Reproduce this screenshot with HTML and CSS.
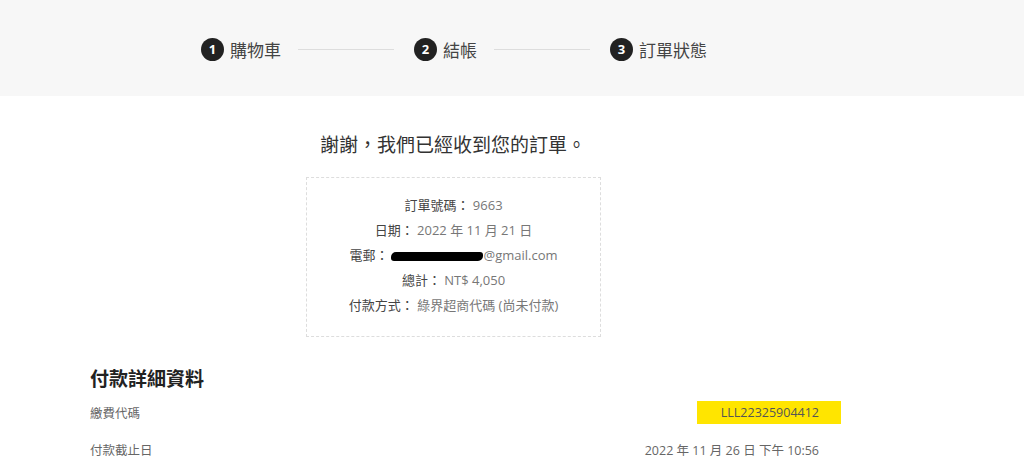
FILE: index.html
```html
<!DOCTYPE html>
<html lang="zh-Hant">

<head>
  <meta charset="UTF-8">
  <meta name="viewport" content="width=device-width, initial-scale=1.0">
  <title>訂單狀態</title>
  <link rel="stylesheet" href="styles.css">
</head>

<body>

  <header class="steps-bar">
    <div class="steps">
      <div class="step"><span class="step-num">1</span><span class="step-name">購物車</span></div>
      <div class="step-line"></div>
      <div class="step"><span class="step-num">2</span><span class="step-name">結帳</span></div>
      <div class="step-line"></div>
      <div class="step"><span class="step-num">3</span><span class="step-name">訂單狀態</span></div>
    </div>
  </header>

  <div class="container">
    <p class="thanks">謝謝，我們已經收到您的訂單。</p>

    <ul class="order-overview">
      <li>訂單號碼： <span class="val">9663</span></li>
      <li>日期： <span class="val">2022 年 11 月 21 日</span></li>
      <li>電郵：<span class="redacted"></span><span class="val">@gmail.com</span></li>
      <li>總計： <span class="val">NT$ 4,050</span></li>
      <li>付款方式： <span class="val">綠界超商代碼 (尚未付款)</span></li>
    </ul>

    <h2 class="details-title">付款詳細資料</h2>
    <div class="detail-row">
      <span class="detail-label">繳費代碼</span>
      <span class="detail-value code">LLL22325904412</span>
    </div>
    <div class="detail-row">
      <span class="detail-label">付款截止日</span>
      <span class="detail-value date">2022 年 11 月 26 日 下午 10:56</span>
    </div>
  </div>

</body>

</html>
```

FILE: styles.css
```css
body {
  font-family: "Open Sans", "Noto Sans CJK TC", sans-serif;
  background-color: #fff;
  color: #333;
  margin: 0;
  padding: 0;
}

.steps-bar {
  background-color: #f7f7f7;
  height: 94px;
  padding-top: 2px;
  display: flex;
  align-items: center;
}

.steps {
  display: flex;
  align-items: center;
  margin-left: 201px;
}

.step {
  display: flex;
  align-items: center;
}

.step-num {
  width: 23px;
  height: 23px;
  border-radius: 50%;
  background-color: #222;
  color: #fff;
  font-size: 13px;
  font-weight: 700;
  display: flex;
  align-items: center;
  justify-content: center;
}

.step-name {
  margin-left: 6px;
  font-size: 17px;
  color: #444;
}

.step-line {
  width: 96px;
  height: 1px;
  background-color: #ddd;
  margin: 0 20px 0 17px;
}

.container {
  width: 751px;
  margin-left: 90px;
  padding-top: 34px;
}

.thanks {
  width: 726px;
  margin: 0;
  text-align: center;
  font-size: 19px;
  color: #333;
  line-height: 30px;
}

.order-overview {
  list-style: none;
  width: 293px;
  margin: 17px 0 0 216px;
  padding: 15px 0 18px;
  border: 1px dashed #ddd;
  text-align: center;
  font-size: 13px;
  color: #444;
}

.order-overview li {
  line-height: 25px;
}

.val {
  color: #777;
}

.redacted {
  display: inline-block;
  width: 92px;
  height: 9px;
  margin-left: 3px;
  background-color: #000;
  border-radius: 5px 3px 5px 3px;
  vertical-align: middle;
}

.details-title {
  font-size: 19px;
  line-height: 26px;
  font-weight: 600;
  color: #222;
  margin: 29px 0 2px;
}

.detail-row {
  display: flex;
  justify-content: space-between;
  align-items: center;
  height: 37px;
  font-size: 12.5px;
  color: #666;
}

.detail-value.code {
  background-color: #ffe500;
  color: #555;
  padding: 3px 22px 3px 24px;
  line-height: 17px;
}

.detail-value.date {
  margin-right: 22px;
  font-size: 12.5px;
}
```
